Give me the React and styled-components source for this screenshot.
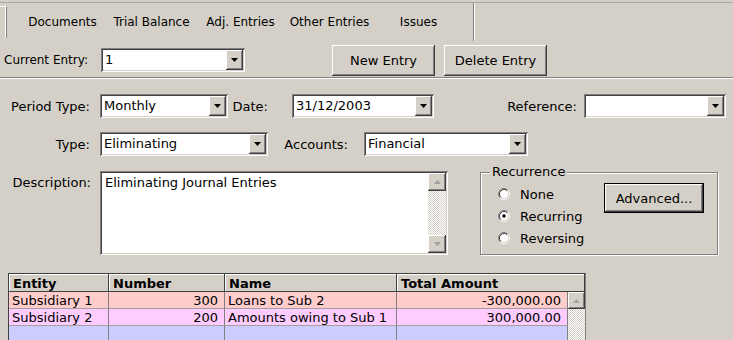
import React from 'react'
import styled, { createGlobalStyle } from 'styled-components'

const face = '#d4d0c8'
const raised = `inset -1px -1px 0 #404040, inset 1px 1px 0 #fff, inset -2px -2px 0 #808080, inset 2px 2px 0 ${face}`
const sunken = `inset 1px 1px 0 #808080, inset -1px -1px 0 #fff, inset 2px 2px 0 #404040, inset -2px -2px 0 ${face}`
const dotted = `repeating-conic-gradient(${face} 0 25%, #fff 0 50%) 0 0 / 2px 2px`

const GlobalStyle = createGlobalStyle`
  html, body {
    margin: 0;
    padding: 0;
    background: ${face};
  }
  body {
    font-family: "DejaVu Sans", Tahoma, sans-serif;
    font-size: 13px;
    color: #000;
  }
`

const tabs = ['Documents', 'Trial Balance', 'Adj. Entries', 'Other Entries', 'Issues']

const rows = [
  { entity: 'Subsidiary 1', number: '300', name: 'Loans to Sub 2', total: '-300,000.00', color: '#ffcccc' },
  { entity: 'Subsidiary 2', number: '200', name: 'Amounts owing to Sub 1', total: '300,000.00', color: '#ffccff' },
  { entity: '', number: '', name: '', total: '', color: '#ccccff' }
]

const DownArrow = ({ color = '#000' }) => (
  <svg width="7" height="4" viewBox="0 0 7 4">
    <path d="M0 0h7L3.5 4z" fill={color} />
  </svg>
)

const UpArrow = ({ color = '#000' }) => (
  <svg width="7" height="4" viewBox="0 0 7 4">
    <path d="M0 4h7L3.5 0z" fill={color} />
  </svg>
)

const Radio = ({ checked }) => (
  <svg width="12" height="12" viewBox="0 0 12 12">
    <circle cx="6" cy="6" r="4.5" fill="#fff" />
    <path d="M2.11 9.89A5.5 5.5 0 0 1 9.89 2.11" stroke="#808080" fill="none" />
    <path d="M9.89 2.11A5.5 5.5 0 0 1 2.11 9.89" stroke="#fff" fill="none" />
    <path d="M2.82 9.18A4.5 4.5 0 0 1 9.18 2.82" stroke="#404040" fill="none" />
    <path d="M9.18 2.82A4.5 4.5 0 0 1 2.82 9.18" stroke={face} fill="none" />
    {checked && <circle cx="6" cy="6" r="1.7" fill="#000" />}
  </svg>
)

const Combo = ({ width, value }) => (
  <ComboBox $w={width}>
    <ComboText>{value}</ComboText>
    <DropButton><DownArrow /></DropButton>
  </ComboBox>
)

const App = () => (
  <Window>
    <GlobalStyle />
    <TabBar>
      <TabEdge />
      <Tabs>
        {tabs.map(t => <Tab key={t}>{t}</Tab>)}
      </Tabs>
      <TabDivider />
    </TabBar>

    <EntryBar>
      <EntryLabel>Current Entry:</EntryLabel>
      <Combo width={144} value="1" />
      <EntryButtons>
        <Button>New Entry</Button>
        <Button>Delete Entry</Button>
      </EntryButtons>
    </EntryBar>
    <Separator />

    <Form>
      <FormRow>
        <FieldLabel $w={100} $pad={10}>Period Type:</FieldLabel>
        <Combo width={128} value="Monthly" />
        <FieldLabel $w={64} $pad={24}>Date:</FieldLabel>
        <Combo width={142} value="31/12/2003" />
        <FieldLabel $w={150} $pad={7}>Reference:</FieldLabel>
        <Combo width={142} value="" />
      </FormRow>
      <FormRow>
        <FieldLabel $w={100} $pad={10}>Type:</FieldLabel>
        <Combo width={168} value="Eliminating" />
        <FieldLabel $w={96} $pad={16}>Accounts:</FieldLabel>
        <Combo width={164} value="Financial" />
      </FormRow>
      <DescriptionRow>
        <FieldLabel $w={100} $pad={9} $top>Description:</FieldLabel>
        <TextBox>
          <TextContent>Eliminating Journal Entries</TextContent>
          <ScrollBar>
            <ScrollButton><UpArrow color="#a0a0a0" /></ScrollButton>
            <ScrollTrack />
            <ScrollButton><DownArrow color="#a0a0a0" /></ScrollButton>
          </ScrollBar>
        </TextBox>
        <GroupBox>
          <Legend>Recurrence</Legend>
          <RadioList>
            <RadioOption><Radio />None</RadioOption>
            <RadioOption><Radio checked />Recurring</RadioOption>
            <RadioOption><Radio />Reversing</RadioOption>
          </RadioList>
          <Button $default $w={100}>Advanced...</Button>
        </GroupBox>
      </DescriptionRow>
    </Form>

    <Grid>
      <HeadCell>Entity</HeadCell>
      <HeadCell>Number</HeadCell>
      <HeadCell>Name</HeadCell>
      <HeadCell $span={2}>Total Amount</HeadCell>
      {rows.map((r, i) => (
        <React.Fragment key={i}>
          <Cell $bg={r.color}>{r.entity}</Cell>
          <Cell $bg={r.color} $right>{r.number}</Cell>
          <Cell $bg={r.color}>{r.name}</Cell>
          <Cell $bg={r.color} $right>{r.total}</Cell>
          {i === 0 ? (
            <GridScrollButton><UpArrow color="#a0a0a0" /></GridScrollButton>
          ) : (
            <GridTrack />
          )}
        </React.Fragment>
      ))}
    </Grid>
  </Window>
)

const Window = styled.div`
  width: 733px;
  height: 340px;
  overflow: hidden;
  background: ${face};
`

const TabBar = styled.div`
  display: flex;
  height: 38px;
  margin-top: 2px;
  border-top: 1px solid #a8a8a8;
`

const TabEdge = styled.div`
  width: 6px;
  margin: 3px 0 3px;
  border-top: 1px solid #fff;
  border-right: 1px solid #808080;
  box-shadow: inset -1px 0 0 #fff;
`

const Tabs = styled.div`
  display: flex;
  margin-left: 11px;
`

const Tab = styled.div`
  width: 89px;
  display: flex;
  align-items: center;
  justify-content: center;
  font-size: 12px;
`

const TabDivider = styled.div`
  width: 1px;
  margin-left: 10px;
  background: #808080;
  box-shadow: 1px 0 0 #fff;
`

const EntryBar = styled.div`
  display: flex;
  align-items: center;
  height: 32px;
  margin-top: 3px;
  padding-left: 4px;
`

const EntryLabel = styled.div`
  width: 97px;
  font-size: 12px;
`

const EntryButtons = styled.div`
  display: flex;
  gap: 9px;
  margin-left: 87px;
`

const Button = styled.div`
  box-sizing: border-box;
  width: ${p => p.$w || 103}px;
  height: ${p => (p.$default ? 30 : 31)}px;
  display: flex;
  align-items: center;
  justify-content: center;
  background: ${face};
  box-shadow: ${raised};
  border: ${p => (p.$default ? '1px solid #000' : 'none')};
`

const Separator = styled.div`
  margin-top: 1px;
  border-top: 1px solid #808080;
  border-bottom: 1px solid #fff;
`

const Form = styled.div`
  display: flex;
  flex-direction: column;
  gap: 14px;
  padding-top: 15px;
`

const FormRow = styled.div`
  display: flex;
  align-items: center;
`

const DescriptionRow = styled.div`
  display: flex;
  align-items: flex-start;
  margin-top: 1px;
`

const FieldLabel = styled.div`
  box-sizing: border-box;
  width: ${p => p.$w}px;
  padding-right: ${p => p.$pad}px;
  padding-top: ${p => (p.$top ? 4 : 0)}px;
  text-align: right;
  white-space: nowrap;
`

const ComboBox = styled.div`
  box-sizing: border-box;
  display: flex;
  width: ${p => p.$w}px;
  height: 24px;
  padding: 2px;
  background: #fff;
  box-shadow: ${sunken};
`

const ComboText = styled.div`
  flex: 1;
  padding-left: 2px;
  line-height: 20px;
  white-space: nowrap;
  overflow: hidden;
`

const DropButton = styled.div`
  width: 17px;
  display: flex;
  align-items: center;
  justify-content: center;
  background: ${face};
  box-shadow: ${raised};
`

const TextBox = styled.div`
  box-sizing: border-box;
  display: flex;
  width: 348px;
  height: 84px;
  padding: 2px;
  background: #fff;
  box-shadow: ${sunken};
`

const TextContent = styled.div`
  flex: 1;
  padding: 2px 3px;
`

const ScrollBar = styled.div`
  width: 18px;
  display: flex;
  flex-direction: column;
`

const ScrollButton = styled.div`
  height: 18px;
  display: flex;
  align-items: center;
  justify-content: center;
  background: ${face};
  box-shadow: ${raised};
`

const ScrollTrack = styled.div`
  flex: 1;
  background: ${dotted};
`

const GroupBox = styled.div`
  position: relative;
  box-sizing: border-box;
  display: flex;
  align-items: flex-start;
  width: 238px;
  height: 83px;
  margin: 1px 0 0 32px;
  padding: 10px 0 0 17px;
  border: 1px solid #808080;
  box-shadow: inset 1px 1px 0 #fff, 1px 1px 0 #fff;
`

const Legend = styled.div`
  position: absolute;
  top: -9px;
  left: 9px;
  padding: 0 2px;
  background: ${face};
`

const RadioList = styled.div`
  width: 106px;
  display: flex;
  flex-direction: column;
`

const RadioOption = styled.div`
  display: flex;
  align-items: center;
  gap: 10px;
  height: 22px;
  white-space: nowrap;
`

const Grid = styled.div`
  display: grid;
  grid-template-columns: 100px 116px 172px 171px 17px;
  grid-template-rows: 18px 17px 17px 17px;
  width: 576px;
  margin: 18px 0 0 8px;
  border-top: 1px solid #404040;
  border-left: 1px solid #404040;
  border-right: 1px solid #808080;
`

const HeadCell = styled.div`
  grid-column: span ${p => p.$span || 1};
  display: flex;
  align-items: center;
  padding-left: 4px;
  font-weight: bold;
  background: ${face};
  box-shadow: inset -1px -1px 0 #404040, inset 1px 1px 0 #fff;
  white-space: nowrap;
`

const Cell = styled.div`
  display: flex;
  align-items: center;
  justify-content: ${p => (p.$right ? 'flex-end' : 'flex-start')};
  padding: 0 ${p => (p.$right ? 6 : 2)}px 0 ${p => (p.$right ? 0 : 3)}px;
  background: ${p => p.$bg};
  border-right: 1px solid #808080;
  border-bottom: 1px solid #a0a0a0;
  white-space: nowrap;
  overflow: hidden;
`

const GridScrollButton = styled(ScrollButton)`
  height: auto;
`

const GridTrack = styled.div`
  background: ${dotted};
`

export default App
